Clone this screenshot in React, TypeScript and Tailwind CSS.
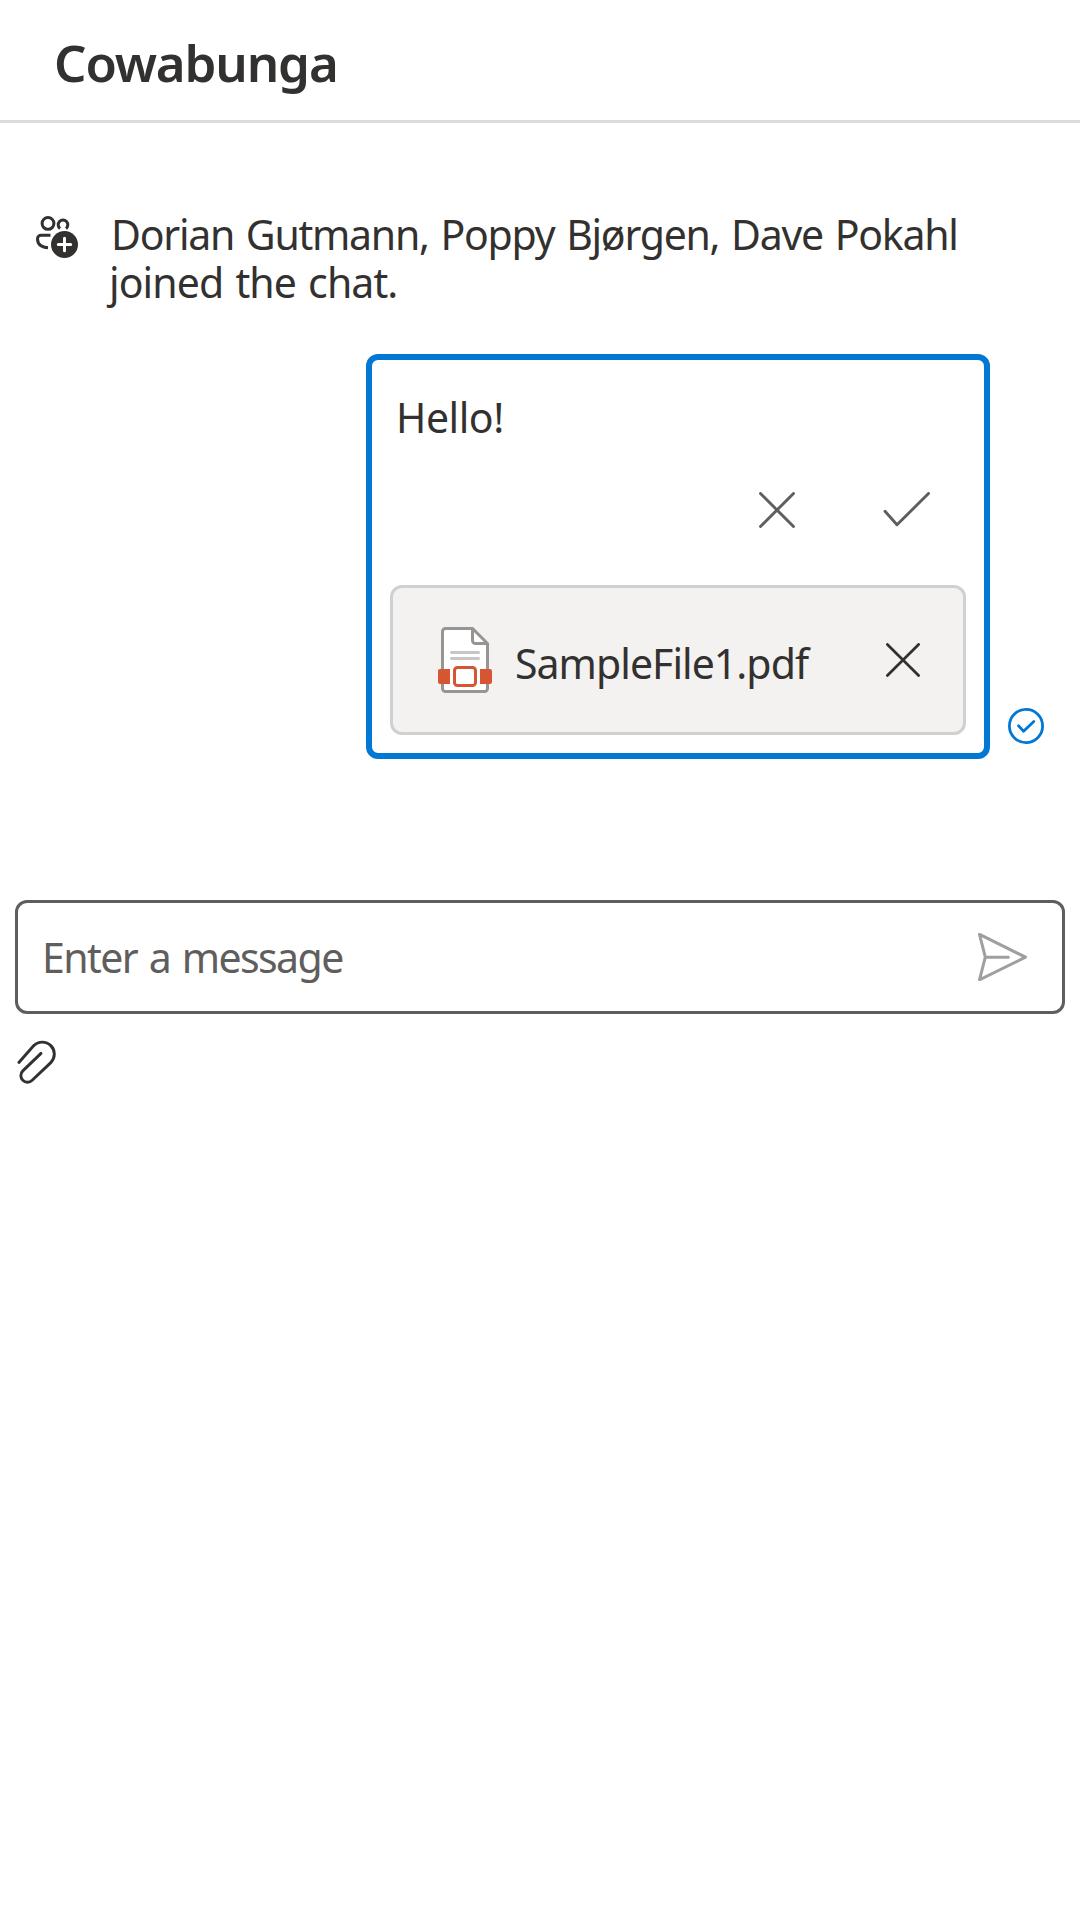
function PeopleAddIcon() {
  return (
    <svg className="block h-[45px] w-[45px] shrink-0" viewBox="35 215 45 45" fill="none" stroke="#323130" strokeWidth="3" strokeLinecap="round">
      <circle cx="48" cy="223.400" r="5.900" />
      <path d="M60 228.600A4.800 4.800 0 1 1 66 228.600" strokeLinecap="butt" />
      <path d="M50.5 235.3H41a3.5 3.5 0 0 0-3.5 3.500c0 5 3.500 8.500 10.500 9" strokeLinecap="butt" />
      <circle cx="64.500" cy="244.500" r="13.500" fill="#323130" stroke="none" />
      <path d="M64.500 238.300v12.400M58.300 244.500h12.400" stroke="#fff" />
    </svg>
  );
}

function CrossIcon({ className }: { className: string }) {
  return (
    <svg className={className} viewBox="0 0 36 36" fill="none" stroke="currentColor" strokeWidth="2.900" strokeLinecap="round">
      <path d="M1.500 1.500l33 33M34.500 1.500l-33 33" />
    </svg>
  );
}

function CheckIcon() {
  return (
    <svg className="block h-9 w-12" viewBox="883 492 48 36" fill="none" stroke="currentColor" strokeWidth="2.900" strokeLinecap="round" strokeLinejoin="round">
      <path d="M885 511.300l12 13.500L928.500 493.500" />
    </svg>
  );
}

function FileIcon() {
  return (
    <svg className="block h-[66px] w-[54px] shrink-0" viewBox="438 627 54 66" fill="none">
      <path d="M445.500 628.500h27l15 15v45a3 3 0 0 1-3 3h-39a3 3 0 0 1-3-3v-57a3 3 0 0 1 3-3z" fill="#fff" stroke="#979593" strokeWidth="3" />
      <path d="M472.500 628.500v12a3 3 0 0 0 3 3h12" stroke="#979593" strokeWidth="3" />
      <path d="M451.500 652.500h27M451.500 658.500h27" stroke="#c8c6c4" strokeWidth="3" strokeLinecap="round" />
      <path d="M450 666h30v21h-30z" fill="#fff" />
      <path d="M450 669h-10a2 2 0 0 0-2 2v11a2 2 0 0 0 2 2h10zM480 669h10a2 2 0 0 1 2 2v11a2 2 0 0 1-2 2h-10z" fill="#d65532" />
      <rect x="454.500" y="667.500" width="21" height="18" rx="3" stroke="#d65532" strokeWidth="3" fill="#fff" />
    </svg>
  );
}

function SeenIcon() {
  return (
    <svg className="mb-[15px] block h-9 w-9 shrink-0" viewBox="1008 708 36 36" fill="none" stroke="#0078d4" strokeWidth="2.800" strokeLinecap="round" strokeLinejoin="round">
      <circle cx="1026" cy="726" r="16.600" />
      <path d="M1018.500 725.800l5.100 5.400 10.200-9.800" />
    </svg>
  );
}

function SendIcon() {
  return (
    <svg className="block h-12 w-[50px] shrink-0" viewBox="978 933 50 48" fill="none" stroke="#a19f9d" strokeWidth="3" strokeLinecap="round" strokeLinejoin="round">
      <path d="M979.500 934.300L1025.500 957.200L979.500 979.800L985.300 957.200ZM985.300 957.200H1008.300" />
    </svg>
  );
}

function AttachIcon() {
  return (
    <svg className="block h-[45px] w-[42px]" viewBox="16 1040 42 45" fill="none" stroke="#323130" strokeWidth="2.900" strokeLinecap="round">
      <path d="M18.900 1062.500L33.800 1045.600A12 12 0 0 1 50.800 1062.600L32.200 1080.300A6.600 6.600 0 0 1 22.800 1070.900L41 1053.400" />
    </svg>
  );
}

export default function App() {
  return (
    <div className="min-h-[1920px] w-[1080px] bg-white font-['Noto_Sans',sans-serif] text-[41px] leading-[48px] text-[#323130]">
      <header className="h-[123px] border-b-[3px] border-[#dcdcdc] pt-[26px] pl-[54px]">
        <h1 className="text-[51px] leading-[72px] font-semibold tracking-[-1.15px]">Cowabunga</h1>
      </header>

      <div className="flex gap-[31px] pt-[87px] pl-[35px]">
        <div className="pt-[5px]"><PeopleAddIcon /></div>
        <p className="whitespace-nowrap tracking-[-1.26px] [word-spacing:2.4px]">
          Dorian Gutmann, Poppy Bjørgen, Dave Pokahl
          <br />
          <span className="-ml-[2px] tracking-[-0.9px]">joined the chat.</span>
        </p>
      </div>

      <div className="mt-12 flex items-end gap-[18px] pl-[366px]">
        <div className="h-[405px] w-[624px] rounded-[12px] border-[6px] border-[#0078d4] px-[18px] pt-[33px]">
          <p className="pl-[6px] tracking-[-0.45px]">Hello!</p>
          <div className="mt-[51px] flex justify-end gap-[88px] pr-[35px] text-[#605e5c]">
            <CrossIcon className="block h-9 w-9" />
            <CheckIcon />
          </div>
          <div className="mt-[57px] flex h-[150px] items-center rounded-[12px] border-[3px] border-[#d0d0d0] bg-[#f3f2f1] pr-[43px] pl-[45px]">
            <FileIcon />
            <span className="ml-[23px] pt-[6px] tracking-[-0.95px]">SampleFile1.pdf</span>
            <CrossIcon className="ml-auto block h-[34px] w-[34px]" />
          </div>
        </div>
        <SeenIcon />
      </div>

      <div className="mx-[15px] mt-[141px] flex h-[114px] items-center justify-between rounded-[12px] border-[3px] border-[#605e5c] pr-[34px] pl-6">
        <span className="tracking-[-1.58px] text-[#605e5c] [word-spacing:2.5px]">Enter a message</span>
        <SendIcon />
      </div>
      <div className="pt-[26px] pl-4"><AttachIcon /></div>
    </div>
  );
}
